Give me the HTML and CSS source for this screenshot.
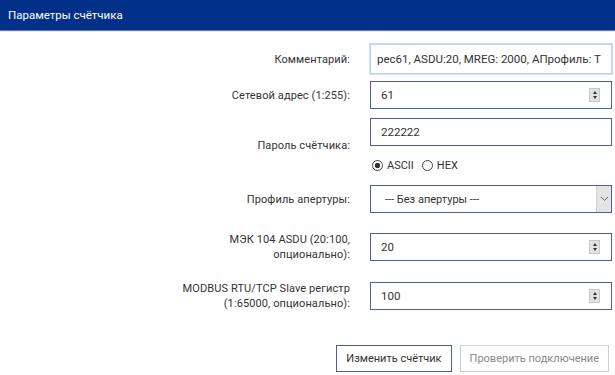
FILE: index.html
```html
<!DOCTYPE html>
<html lang="ru">
<head>
    <meta charset="UTF-8">
    <title>Параметры счётчика</title>
    <link rel="stylesheet" href="styles.css">
</head>
<body>
    <div class="header">Параметры счётчика</div>

    <form class="form">
        <div class="row row-first">
            <label class="label">Комментарий:</label>
            <div class="field field-focus">
                <input class="input input-scrolled" type="text" value="рес61, ASDU:20, MREG: 2000, АПрофиль: Т">
            </div>
        </div>

        <div class="row">
            <label class="label">Сетевой адрес (1:255):</label>
            <div class="field">
                <input class="input" type="text" value="61">
                <span class="spin"><i class="up"></i><i class="down"></i></span>
            </div>
        </div>

        <div class="row row-pass">
            <label class="label">Пароль счётчика:</label>
            <div class="group">
                <div class="field">
                    <input class="input" type="text" value="222222">
                </div>
                <div class="radios">
                    <span class="radio checked"></span>ASCII
                    <span class="radio radio-second"></span>HEX
                </div>
            </div>
        </div>

        <div class="row row-select">
            <label class="label">Профиль апертуры:</label>
            <div class="field">
                <span class="input select-text">--- Без апертуры ---</span>
                <span class="arrow">
                    <svg width="9" height="6" viewBox="0 0 9 6"><path d="M1 1 L4.5 4.5 L8 1" fill="none" stroke="#666" stroke-width="1"/></svg>
                </span>
            </div>
        </div>

        <div class="row row-two">
            <label class="label">МЭК 104 ASDU (20:100,<br>опционально):</label>
            <div class="field">
                <input class="input" type="text" value="20">
                <span class="spin"><i class="up"></i><i class="down"></i></span>
            </div>
        </div>

        <div class="row row-two">
            <label class="label">MODBUS RTU/TCP Slave регистр<br>(1:65000, опционально):</label>
            <div class="field">
                <input class="input" type="text" value="100">
                <span class="spin"><i class="up"></i><i class="down"></i></span>
            </div>
        </div>

        <div class="buttons">
            <button type="button" class="btn">Изменить счётчик</button>
            <button type="button" class="btn btn-disabled">Проверить подключение</button>
        </div>
    </form>
</body>
</html>
```

FILE: styles.css
```css
body {
    margin: 0;
    font-family: Roboto, "Noto Sans", sans-serif;
    font-size: 11px;
    color: #222;
    background-color: #fff;
}
.header {
    height: 30px;
    line-height: 30px;
    padding-left: 8px;
    font-size: 11.5px;
    background-color: #003087;
    color: #fff;
    border-bottom: 1px solid #6a7db3;
    box-shadow: 0 1px 0 #e6e6e6;
}
.form {
    display: flex;
    flex-direction: column;
}
.row {
    display: grid;
    grid-template-columns: 350px 242px;
    column-gap: 20px;
    align-items: center;
    margin-top: 7px;
}
.row-first {
    margin-top: 13px;
}
.row-pass {
    margin-top: 9px;
}
.row-select {
    margin-top: 12px;
}
.row-two {
    margin-top: 19px;
}
.label {
    text-align: right;
    line-height: 15px;
    letter-spacing: 0.1px;
    color: #333;
}
.field {
    display: flex;
    align-items: center;
    height: 26px;
    border: 1px solid #4a5f9e;
    background-color: #fff;
}
.field-focus {
    height: 28px;
    border: 1px solid #b8d3f3;
    box-shadow: 0 0 0 1px #c9def7;
}
.input {
    flex: 1;
    min-width: 0;
    border: none;
    outline: none;
    padding: 0 0 0 10px;
    font-family: inherit;
    font-size: 11.5px;
    color: #333;
    background: transparent;
}
.input-scrolled {
    padding-left: 6px;
}
.select-text {
    padding-left: 14px;
    font-size: 11px;
}
.spin {
    display: flex;
    flex-direction: column;
    justify-content: center;
    align-items: center;
    width: 9px;
    height: 12px;
    margin-right: 11px;
    background-color: #e2e2e2;
    border: 1px solid #c8c8c8;
}
.spin i {
    width: 0;
    height: 0;
    border-left: 2px solid transparent;
    border-right: 2px solid transparent;
}
.spin .up {
    border-bottom: 3px solid #333;
    margin-bottom: 2px;
}
.spin .down {
    border-top: 3px solid #333;
}
.arrow {
    display: flex;
    align-items: center;
    justify-content: center;
    width: 14px;
    height: 100%;
    background-color: #e4e4e4;
    border-left: 1px solid #d0d0d0;
}
.group {
    display: flex;
    flex-direction: column;
}
.radios {
    display: flex;
    align-items: center;
    height: 16px;
    margin-top: 11px;
    padding-left: 2px;
    color: #333;
}
.radio {
    display: inline-block;
    box-sizing: border-box;
    width: 11px;
    height: 11px;
    margin-right: 4px;
    border: 1px solid #444;
    border-radius: 50%;
}
.radio.checked {
    background: radial-gradient(circle, #333 0 2.5px, transparent 3px);
}
.radio-second {
    margin-left: 8px;
}
.buttons {
    display: flex;
    justify-content: flex-end;
    gap: 8px;
    margin-top: 34px;
    padding-right: 6px;
}
.btn {
    height: 27px;
    padding: 0 9px;
    font-family: inherit;
    font-size: 11px;
    color: #333;
    background-color: #fff;
    border: 1px solid #4a5f9e;
}
.btn-disabled {
    color: #888;
    border-color: #cfcfcf;
}
```
